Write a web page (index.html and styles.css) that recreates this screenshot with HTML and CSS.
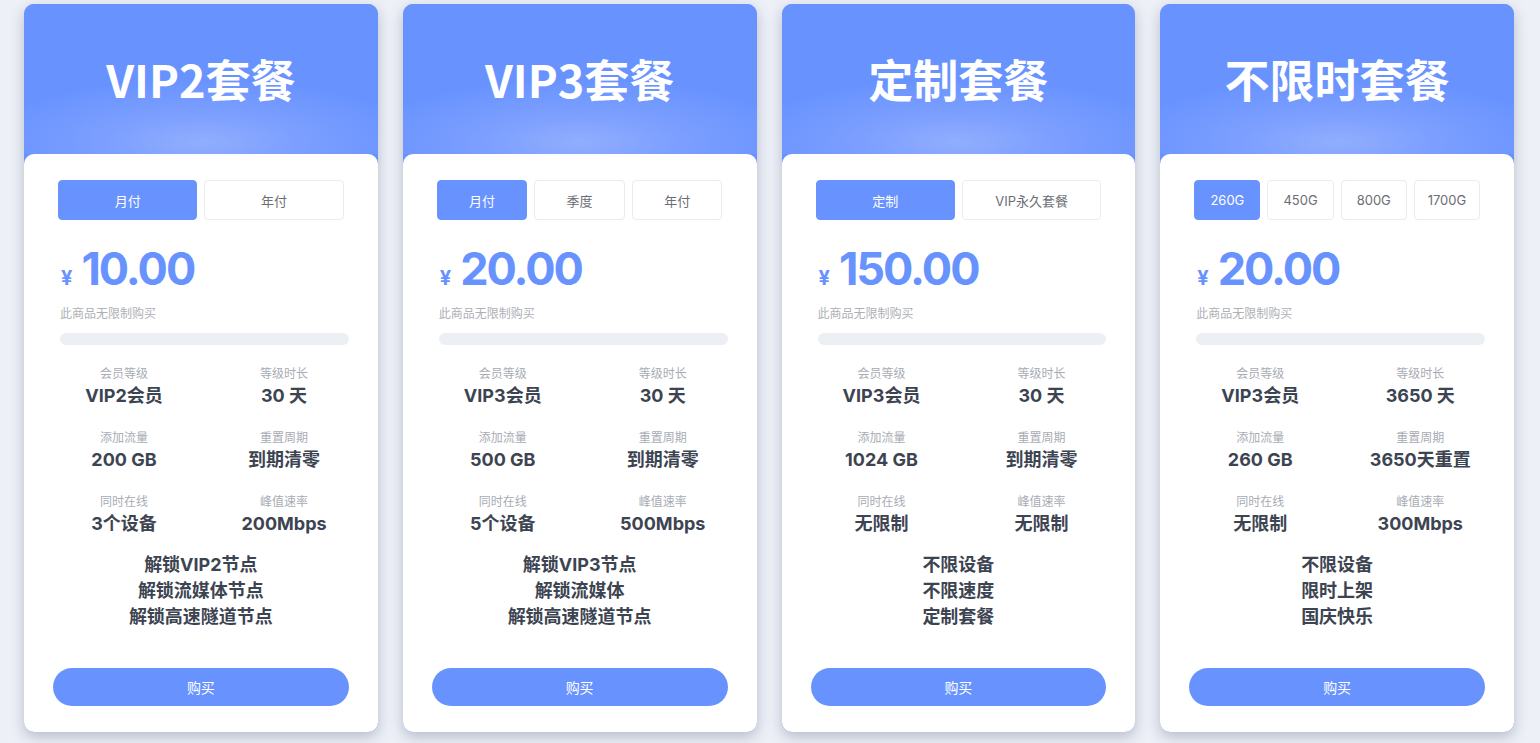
FILE: index.html
```html
<!DOCTYPE html>
<html lang="zh-CN">
<head>
<meta charset="utf-8">
<title>套餐</title>
<link rel="stylesheet" href="styles.css">
</head>
<body>
<main class="plans">

  <section class="card">
    <header class="card-head"><h2 class="card-title">VIP2套餐</h2></header>
    <div class="card-body">
      <div class="tabs">
        <button class="tab active">月付</button>
        <button class="tab">年付</button>
      </div>
      <div class="price"><span class="cur">¥</span><span class="amount">10.00</span></div>
      <p class="note">此商品无限制购买</p>
      <div class="bar"></div>
      <div class="stats">
        <div class="stat"><div class="label">会员等级</div><div class="value">VIP2会员</div></div>
        <div class="stat"><div class="label">等级时长</div><div class="value">30 天</div></div>
        <div class="stat"><div class="label">添加流量</div><div class="value">200 GB</div></div>
        <div class="stat"><div class="label">重置周期</div><div class="value">到期清零</div></div>
        <div class="stat"><div class="label">同时在线</div><div class="value">3个设备</div></div>
        <div class="stat"><div class="label">峰值速率</div><div class="value">200Mbps</div></div>
      </div>
      <ul class="features">
        <li>解锁VIP2节点</li>
        <li>解锁流媒体节点</li>
        <li>解锁高速隧道节点</li>
      </ul>
      <button class="buy">购买</button>
    </div>
  </section>

  <section class="card">
    <header class="card-head"><h2 class="card-title">VIP3套餐</h2></header>
    <div class="card-body">
      <div class="tabs">
        <button class="tab active">月付</button>
        <button class="tab">季度</button>
        <button class="tab">年付</button>
      </div>
      <div class="price"><span class="cur">¥</span><span class="amount">20.00</span></div>
      <p class="note">此商品无限制购买</p>
      <div class="bar"></div>
      <div class="stats">
        <div class="stat"><div class="label">会员等级</div><div class="value">VIP3会员</div></div>
        <div class="stat"><div class="label">等级时长</div><div class="value">30 天</div></div>
        <div class="stat"><div class="label">添加流量</div><div class="value">500 GB</div></div>
        <div class="stat"><div class="label">重置周期</div><div class="value">到期清零</div></div>
        <div class="stat"><div class="label">同时在线</div><div class="value">5个设备</div></div>
        <div class="stat"><div class="label">峰值速率</div><div class="value">500Mbps</div></div>
      </div>
      <ul class="features">
        <li>解锁VIP3节点</li>
        <li>解锁流媒体</li>
        <li>解锁高速隧道节点</li>
      </ul>
      <button class="buy">购买</button>
    </div>
  </section>

  <section class="card">
    <header class="card-head"><h2 class="card-title">定制套餐</h2></header>
    <div class="card-body">
      <div class="tabs">
        <button class="tab active">定制</button>
        <button class="tab">VIP永久套餐</button>
      </div>
      <div class="price"><span class="cur">¥</span><span class="amount">150.00</span></div>
      <p class="note">此商品无限制购买</p>
      <div class="bar"></div>
      <div class="stats">
        <div class="stat"><div class="label">会员等级</div><div class="value">VIP3会员</div></div>
        <div class="stat"><div class="label">等级时长</div><div class="value">30 天</div></div>
        <div class="stat"><div class="label">添加流量</div><div class="value">1024 GB</div></div>
        <div class="stat"><div class="label">重置周期</div><div class="value">到期清零</div></div>
        <div class="stat"><div class="label">同时在线</div><div class="value">无限制</div></div>
        <div class="stat"><div class="label">峰值速率</div><div class="value">无限制</div></div>
      </div>
      <ul class="features">
        <li>不限设备</li>
        <li>不限速度</li>
        <li>定制套餐</li>
      </ul>
      <button class="buy">购买</button>
    </div>
  </section>

  <section class="card">
    <header class="card-head"><h2 class="card-title">不限时套餐</h2></header>
    <div class="card-body">
      <div class="tabs">
        <button class="tab active">260G</button>
        <button class="tab">450G</button>
        <button class="tab">800G</button>
        <button class="tab">1700G</button>
      </div>
      <div class="price"><span class="cur">¥</span><span class="amount">20.00</span></div>
      <p class="note">此商品无限制购买</p>
      <div class="bar"></div>
      <div class="stats">
        <div class="stat"><div class="label">会员等级</div><div class="value">VIP3会员</div></div>
        <div class="stat"><div class="label">等级时长</div><div class="value">3650 天</div></div>
        <div class="stat"><div class="label">添加流量</div><div class="value">260 GB</div></div>
        <div class="stat"><div class="label">重置周期</div><div class="value">3650天重置</div></div>
        <div class="stat"><div class="label">同时在线</div><div class="value">无限制</div></div>
        <div class="stat"><div class="label">峰值速率</div><div class="value">300Mbps</div></div>
      </div>
      <ul class="features">
        <li>不限设备</li>
        <li>限时上架</li>
        <li>国庆快乐</li>
      </ul>
      <button class="buy">购买</button>
    </div>
  </section>

</main>
</body>
</html>
```

FILE: styles.css
```css
* { box-sizing: border-box; }

html, body {
  margin: 0;
  padding: 0;
  height: 100%;
  overflow: hidden;
}

body {
  background: #edf0f7;
  font-family: Inter, "Noto Sans CJK SC", sans-serif;
  color: #3d4451;
}

.plans {
  display: grid;
  grid-template-columns: repeat(4, 1fr);
  column-gap: 25px;
  padding: 4px 26px 0 24px;
  align-items: start;
}

.card {
  background: #6893ff;
  border-radius: 10px;
  overflow: hidden;
  box-shadow: 0 5px 14px rgba(60, 70, 100, 0.3);
}

.card-head {
  height: 150px;
  display: flex;
  align-items: center;
  justify-content: center;
  background: radial-gradient(ellipse 62% 42% at 50% 92%, #91aefd 0%, #7ea0ff 40%, #6893ff 100%);
}

.card-title {
  margin: 0;
  color: #fff;
  font-family: "Noto Sans CJK SC", sans-serif;
  font-weight: 700;
  font-size: 45px;
  line-height: 1;
  padding-bottom: 2px;
}

.card-body {
  background: #fff;
  border-radius: 10px 10px 0 0;
  padding: 26px 0 26px;
  display: flex;
  flex-direction: column;
}

.tabs {
  display: flex;
  gap: 7px;
  margin: 0 34px;
}

.tab {
  flex: 1 1 0;
  height: 40px;
  border: 1px solid #e8ebf0;
  border-radius: 4px;
  background: #fff;
  color: #6b6e75;
  font-family: Inter, "Noto Sans CJK SC", sans-serif;
  font-size: 13px;
  padding: 0;
}

.tab.active {
  background: #6893ff;
  border-color: #6893ff;
  color: #fff;
}

.price {
  display: flex;
  align-items: baseline;
  margin: 21px 0 0 37px;
  height: 56px;
  line-height: 56px;
  color: #6893ff;
  font-weight: 700;
}

.cur {
  font-size: 20px;
  margin-right: 9px;
}

.amount {
  font-size: 45px;
  letter-spacing: -2px;
}

.note {
  margin: 8px 0 0 36px;
  font-size: 12px;
  line-height: 18px;
  color: #aeb0b6;
}

.bar {
  height: 12px;
  margin: 10px 29px 0 36px;
  border-radius: 6px;
  background: #eceff3;
}

.stats {
  display: grid;
  grid-template-columns: 160px 160px;
  row-gap: 20px;
  margin: 20px 0 0 20px;
  text-align: center;
}

.label {
  font-size: 12px;
  line-height: 18px;
  color: #a8acb4;
}

.value {
  font-size: 18px;
  line-height: 26px;
  font-weight: 700;
  color: #3d4451;
}

.features {
  list-style: none;
  margin: 15px 0 0;
  padding: 0;
  text-align: center;
  font-size: 18px;
  line-height: 26px;
  font-weight: 700;
  color: #3d4451;
}

.buy {
  margin: 38px 29px 0;
  height: 38px;
  border: none;
  border-radius: 19px;
  background: #6893ff;
  color: #fff;
  font-family: Inter, "Noto Sans CJK SC", sans-serif;
  font-size: 14px;
  padding: 0;
}
```
